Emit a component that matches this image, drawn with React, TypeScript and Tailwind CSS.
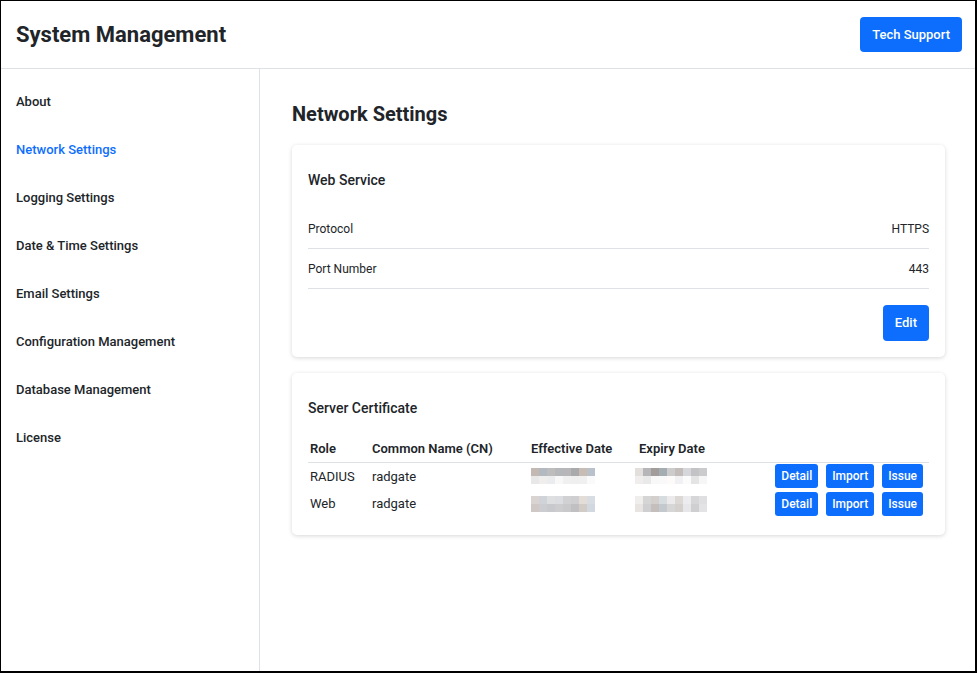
import { ReactNode } from "react";

const navItems = [
  "About",
  "Network Settings",
  "Logging Settings",
  "Date & Time Settings",
  "Email Settings",
  "Configuration Management",
  "Database Management",
  "License",
];

// pixelated (redacted) date cells
const blurred = {
  effective1: [
    ["#c4b8b3", "#b3b9c1", "#bdbdbe", "#b5b7bb", "#b7b7b9", "#a9aaab", "#c7bdb5", "#b9c1cb"],
    ["#e8e8e8", "#efeeed", "#ebecee", "#f8f8f8", "#f0f0f0", "#efefef", "#f0f0f0", "#fafafa"],
  ],
  expiry1: [
    ["#e3dfdc", "#b6b6b8", "#a29c9b", "#a4aeb2", "#cccccc", "#c2bdbb", "#d6d7da", "#c3c3c5", "#cbcbcd"],
    ["#efeeed", "#e9e9e9", "#f8f8f8", "#f9f9fa", "#fcfbfa", "#f1f1f3", "#fbfbfb", "#e4e4e4", "#f6f6f6"],
  ],
  effective2: [
    ["#d9d3d1", "#d0d3d7", "#dedfe1", "#dcdde0", "#d1d1d3", "#cfcfd1", "#e3ddd8", "#d8dde4"],
    ["#d0c8c4", "#cbcdd1", "#c8c9cc", "#cdcdcf", "#c9c9cb", "#c0c0c2", "#d2ccc6", "#d2d8e0"],
  ],
  expiry2: [
    ["#f0eeed", "#d6d5d5", "#d3cfcd", "#d7dcdf", "#eceaea", "#dcd8d6", "#ececee", "#d6d6d8", "#dfdfe1"],
    ["#e8e4e1", "#cfcfd1", "#c4bebc", "#c3c9cd", "#d6d6d6", "#d3d0ce", "#e7e7e9", "#cfcfd1", "#e3e3e5"],
  ],
};

const certificates = [
  { role: "RADIUS", cn: "radgate", effective: blurred.effective1, expiry: blurred.expiry1 },
  { role: "Web", cn: "radgate", effective: blurred.effective2, expiry: blurred.expiry2 },
];

export default function App() {
  return (
    <div className="flex h-[673px] w-[977px] flex-col overflow-hidden border-t border-l border-r-2 border-b-2 border-black bg-white font-['Roboto','Liberation_Sans',sans-serif] text-[#212529]">
      <header className="flex h-[68px] shrink-0 items-center justify-between border-b border-[#dee2e6] pl-[15px] pr-[13px]">
        <h1 className="text-[22px] font-bold">System Management</h1>
        <button className="h-[35px] rounded-[4px] bg-[#0d6efd] px-3 text-[13px] font-medium text-white">
          Tech Support
        </button>
      </header>

      <div className="flex min-h-0 flex-1">
        <aside className="w-[259px] shrink-0 border-r border-[#dee2e6] pl-[15px] pt-[9px]">
          {navItems.map((item) => (
            <div
              key={item}
              className={`flex h-12 items-center text-[13px] font-medium ${
                item === "Network Settings" ? "text-[#0d6efd]" : "text-[#212529]"
              }`}
            >
              {item}
            </div>
          ))}
        </aside>

        <main className="flex-1 pl-8 pr-[30px] pt-[31px]">
          <h2 className="text-xl leading-7 font-bold">Network Settings</h2>

          <Card title="Web Service" className="mt-[17px]">
            <div className="mt-[19px]">
              <InfoRow label="Protocol" value="HTTPS" />
              <InfoRow label="Port Number" value="443" />
            </div>
            <div className="mt-4 flex justify-end">
              <button className="h-[36px] rounded-[4px] bg-[#0d6efd] px-3 text-[13px] font-medium text-white">
                Edit
              </button>
            </div>
          </Card>

          <Card title="Server Certificate" className="mt-4">
            <table className="mt-[18px] mb-[1px] w-full border-collapse text-[13px]">
              <thead>
                <tr className="h-[26px] border-b border-[#dee2e6] text-left">
                  <th className="w-[62px] px-[2px] font-semibold">Role</th>
                  <th className="w-[159px] px-[2px] font-semibold">Common Name (CN)</th>
                  <th className="w-[104px] px-[2px] font-semibold">Effective Date</th>
                  <th className="px-[6px] font-semibold">Expiry Date</th>
                  <th />
                </tr>
              </thead>
              <tbody>
                {certificates.map((cert) => (
                  <tr key={cert.role} className="h-[28px]">
                    <td className="px-[2px]">{cert.role}</td>
                    <td className="px-[2px]">{cert.cn}</td>
                    <td className="px-[2px]">
                      <Pixels rows={cert.effective} />
                    </td>
                    <td className="px-[2px]">
                      <Pixels rows={cert.expiry} />
                    </td>
                    <td className="pr-[6px]">
                      <div className="flex justify-end gap-2">
                        <SmallButton>Detail</SmallButton>
                        <SmallButton>Import</SmallButton>
                        <SmallButton>Issue</SmallButton>
                      </div>
                    </td>
                  </tr>
                ))}
              </tbody>
            </table>
          </Card>
        </main>
      </div>
    </div>
  );
}

function Card({ title, className, children }: { title: string; className?: string; children: ReactNode }) {
  return (
    <section
      className={`rounded-[5px] bg-white px-4 pt-[25px] pb-4 shadow-[0_1px_4px_rgba(0,0,0,0.16)] ${className ?? ""}`}
    >
      <h3 className="text-sm leading-5 font-medium">{title}</h3>
      {children}
    </section>
  );
}

function InfoRow({ label, value }: { label: string; value: string }) {
  return (
    <div className="flex h-10 items-center justify-between border-b border-[#dee2e6] text-xs">
      <span>{label}</span>
      <span>{value}</span>
    </div>
  );
}

function SmallButton({ children }: { children: ReactNode }) {
  return (
    <button className="h-6 rounded-[3px] bg-[#0d6efd] px-[6px] text-xs font-medium text-white">
      {children}
    </button>
  );
}

function Pixels({ rows }: { rows: string[][] }) {
  return (
    <div className="flex flex-col">
      {rows.map((row, i) => (
        <div key={i} className="flex">
          {row.map((color, j) => (
            <span key={j} className="h-2 w-2" style={{ backgroundColor: color }} />
          ))}
        </div>
      ))}
    </div>
  );
}
